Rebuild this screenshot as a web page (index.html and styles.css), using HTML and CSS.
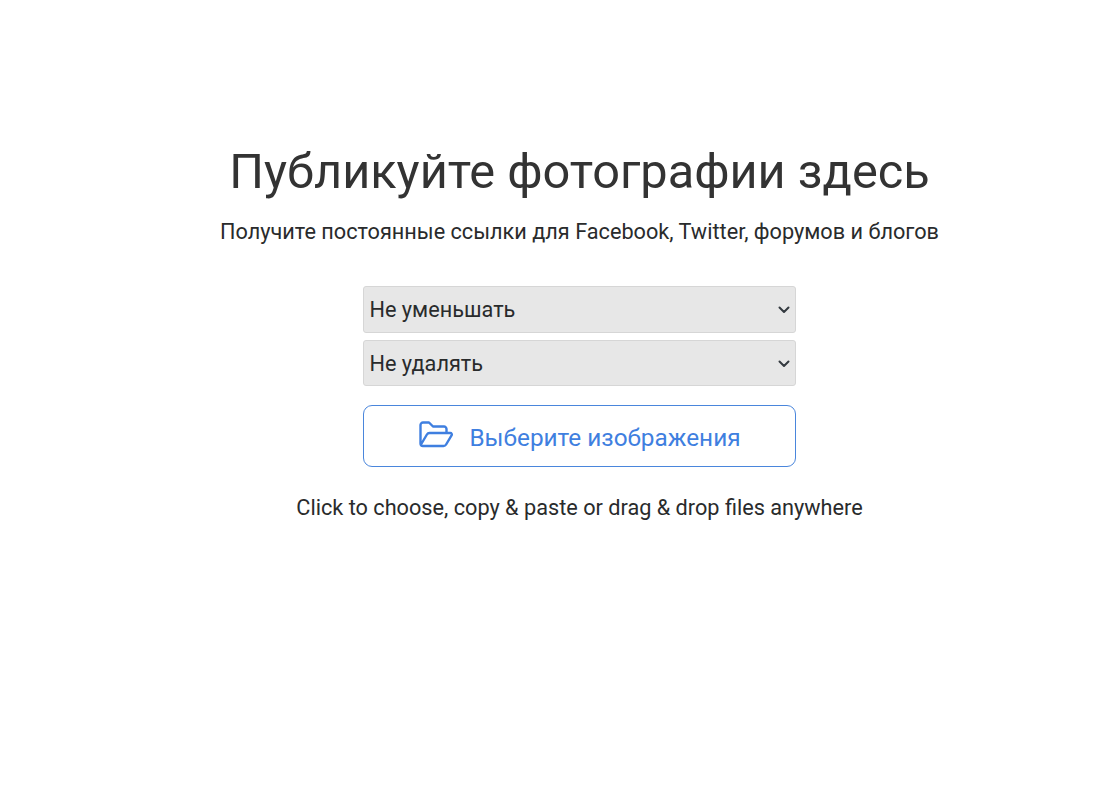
FILE: index.html
```html
<!DOCTYPE html>
<html lang="ru">
<head>
<meta charset="utf-8">
<title>Публикуйте фотографии здесь</title>
<link rel="stylesheet" href="styles.css">
</head>
<body>
<main class="page">
  <h1 class="title">Публикуйте фотографии здесь</h1>
  <p class="subtitle">Получите постоянные ссылки для Facebook, Twitter, форумов и блогов</p>
  <form class="form">
    <div class="select-wrap">
      <select class="select"><option>Не уменьшать</option></select>
      <svg class="chevron" viewBox="0 0 12 8" width="12" height="8"><path d="M1.500 1.500 6 6l4.500-4.500" fill="none" stroke="#343a40" stroke-width="2" stroke-linecap="round" stroke-linejoin="round"/></svg>
    </div>
    <div class="select-wrap">
      <select class="select"><option>Не удалять</option></select>
      <svg class="chevron" viewBox="0 0 12 8" width="12" height="8"><path d="M1.500 1.500 6 6l4.500-4.500" fill="none" stroke="#343a40" stroke-width="2" stroke-linecap="round" stroke-linejoin="round"/></svg>
    </div>
    <button type="button" class="choose">
      <svg class="folder" viewBox="0 0 36 27" width="36" height="27"><path d="M2.500 22.500V4A2.500 2.500 0 0 1 5 1.500h6l4 4h11A2.500 2.500 0 0 1 28.500 8v4M2.500 22.500A2.500 2.500 0 0 0 5 25h20.500a3 3 0 0 0 2.600-1.500l5.600-9.300A1.500 1.500 0 0 0 32.400 12H11.500a3 3 0 0 0-2.600 1.500L3 23.500" fill="none" stroke="#3f7fe0" stroke-width="2.400" stroke-linecap="round" stroke-linejoin="round"/></svg>
      <span>Выберите изображения</span>
    </button>
  </form>
  <p class="hint">Click to choose, copy &amp; paste or drag &amp; drop files anywhere</p>
</main>
</body>
</html>
```
FILE: styles.css
```css
* { box-sizing: border-box; }
html, body { margin: 0; background: #fff; }
body { font-family: Roboto, "Liberation Sans", sans-serif; color: #292b2c; height: 800px; overflow: hidden; }
.page { display: flex; flex-direction: column; align-items: center; padding: 144px 0 0 64px; }
.title { margin: 0; font-size: 48.700px; font-weight: 400; line-height: 56px; color: #333; }
.subtitle { margin: 18px 0 0; font-size: 21.700px; line-height: 28px; }
.form { width: 433px; margin-top: 40px; display: flex; flex-direction: column; }
.select-wrap { position: relative; height: 46.500px; margin-bottom: 7px; }
.select { appearance: none; display: block; width: 100%; height: 100%; padding: 2px 30px 0 5.500px; border: 1px solid #d6d6d6; border-radius: 3px; background: #e7e7e7; color: #292b2c; font: 400 21.700px/1.2 Roboto, sans-serif; }
.chevron { position: absolute; right: 6px; top: 20px; pointer-events: none; }
.choose { display: flex; align-items: center; justify-content: center; gap: 15px; height: 62px; margin-top: 12px; padding: 4px 0 0; border: 1px solid #4a86dc; border-radius: 9px; background: #fff; color: #3f7fe0; font: 400 24.350px/1.2 Roboto, sans-serif; }
.folder { margin-bottom: 7px; }
.hint { margin: 27px 0 0; font-size: 21.700px; line-height: 28px; }
```
